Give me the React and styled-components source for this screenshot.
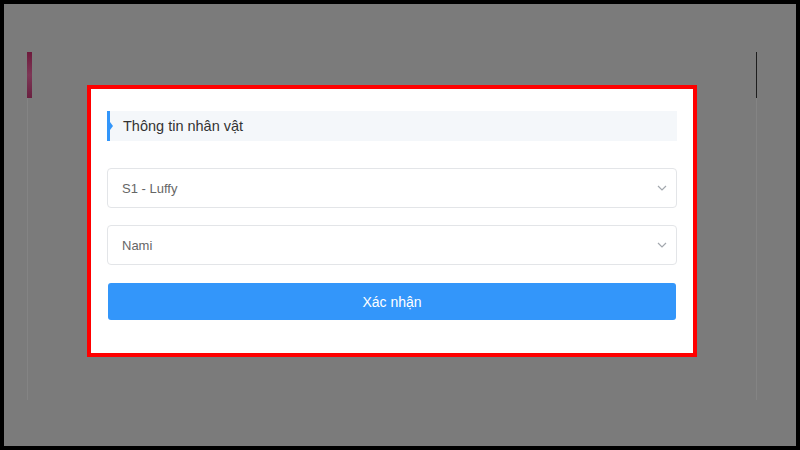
import React, { useState } from 'react';
import styled, { createGlobalStyle } from 'styled-components';

const GlobalStyle = createGlobalStyle`
  html, body {
    margin: 0;
    padding: 0;
    background: #000;
  }
  * {
    box-sizing: border-box;
  }
`;

const options1 = ['S1 - Luffy', 'S2 - Zoro', 'S3 - Sanji'];
const options2 = ['Nami', 'Usopp', 'Chopper'];

const App = () => {
  const [server, setServer] = useState(options1[0]);
  const [hero, setHero] = useState(options2[0]);

  return (
    <>
      <GlobalStyle />
      <Frame>
        <BackPage>
          <PageTop>
            <PinkMark />
            <DarkMark />
          </PageTop>
        </BackPage>

        <Modal>
          <SectionTitle>Thông tin nhân vật</SectionTitle>
          <Field>
            <Select value={server} onChange={(e) => setServer(e.target.value)}>
              {options1.map((o) => (
                <option key={o}>{o}</option>
              ))}
            </Select>
            <Chevron />
          </Field>
          <Field>
            <Select value={hero} onChange={(e) => setHero(e.target.value)}>
              {options2.map((o) => (
                <option key={o}>{o}</option>
              ))}
            </Select>
            <Chevron />
          </Field>
          <ConfirmButton type="button">Xác nhận</ConfirmButton>
        </Modal>
      </Frame>
    </>
  );
};

const Chevron = () => (
  <ChevronIcon width="10" height="6" viewBox="0 0 10 6">
    <path d="M1 1 L5 5 L9 1" fill="none" stroke="#a3a8ae" strokeWidth="1.2" />
  </ChevronIcon>
);

// Styled components
const Frame = styled.div`
  position: relative;
  width: 800px;
  height: 450px;
  border: 4px solid #000;
  background: #7b7b7b;
  padding: 48px 0 0 23px;
  font-family: 'Liberation Sans', Arial, sans-serif;
`;

const BackPage = styled.div`
  width: 730px;
  height: 348px;
  border-left: 1px solid #848484;
  border-right: 1px solid #848484;
`;

const PageTop = styled.div`
  display: flex;
  justify-content: space-between;
  height: 46px;
  margin-left: -1px;
  margin-right: -1px;
`;

const PinkMark = styled.div`
  width: 5px;
  height: 46px;
  background: linear-gradient(to bottom, #6e1a3c, #7d3756 50%, #6a2040);
`;

const DarkMark = styled.div`
  width: 1px;
  height: 46px;
  background: #1e1e1e;
`;

const Modal = styled.div`
  position: absolute;
  left: 83px;
  top: 81px;
  width: 610px;
  height: 272px;
  border: 4px solid #ff0000;
  background: #fff;
  padding: 22px 16px 0;
  display: flex;
  flex-direction: column;
`;

const SectionTitle = styled.div`
  position: relative;
  height: 30px;
  background: #f4f7fa;
  padding-left: 16px;
  display: flex;
  align-items: center;
  font-size: 14.5px;
  color: #333;
  margin-bottom: 27px;

  &::before {
    content: '';
    position: absolute;
    left: 0;
    top: 0;
    width: 3px;
    height: 100%;
    background: #3396fa;
  }

  &::after {
    content: '';
    position: absolute;
    left: 3px;
    top: 50%;
    margin-top: -4px;
    border-top: 4px solid transparent;
    border-bottom: 4px solid transparent;
    border-left: 3px solid #3396fa;
  }
`;

const Field = styled.div`
  position: relative;
  height: 40px;
  margin-bottom: 17px;
`;

const Select = styled.select`
  appearance: none;
  width: 100%;
  height: 100%;
  border: 1px solid #e3e5e8;
  border-radius: 4px;
  background: #fff;
  padding: 0 30px 0 14px;
  font-family: inherit;
  font-size: 13px;
  color: #666;
  outline: none;
`;

const ChevronIcon = styled.svg`
  position: absolute;
  right: 10px;
  top: 17px;
  pointer-events: none;
`;

const ConfirmButton = styled.button`
  margin: 1px 1px 0;
  height: 37px;
  border: none;
  border-radius: 3px;
  background: #3396fa;
  color: #fff;
  font-family: inherit;
  font-size: 14px;
  cursor: pointer;
`;

export default App;
